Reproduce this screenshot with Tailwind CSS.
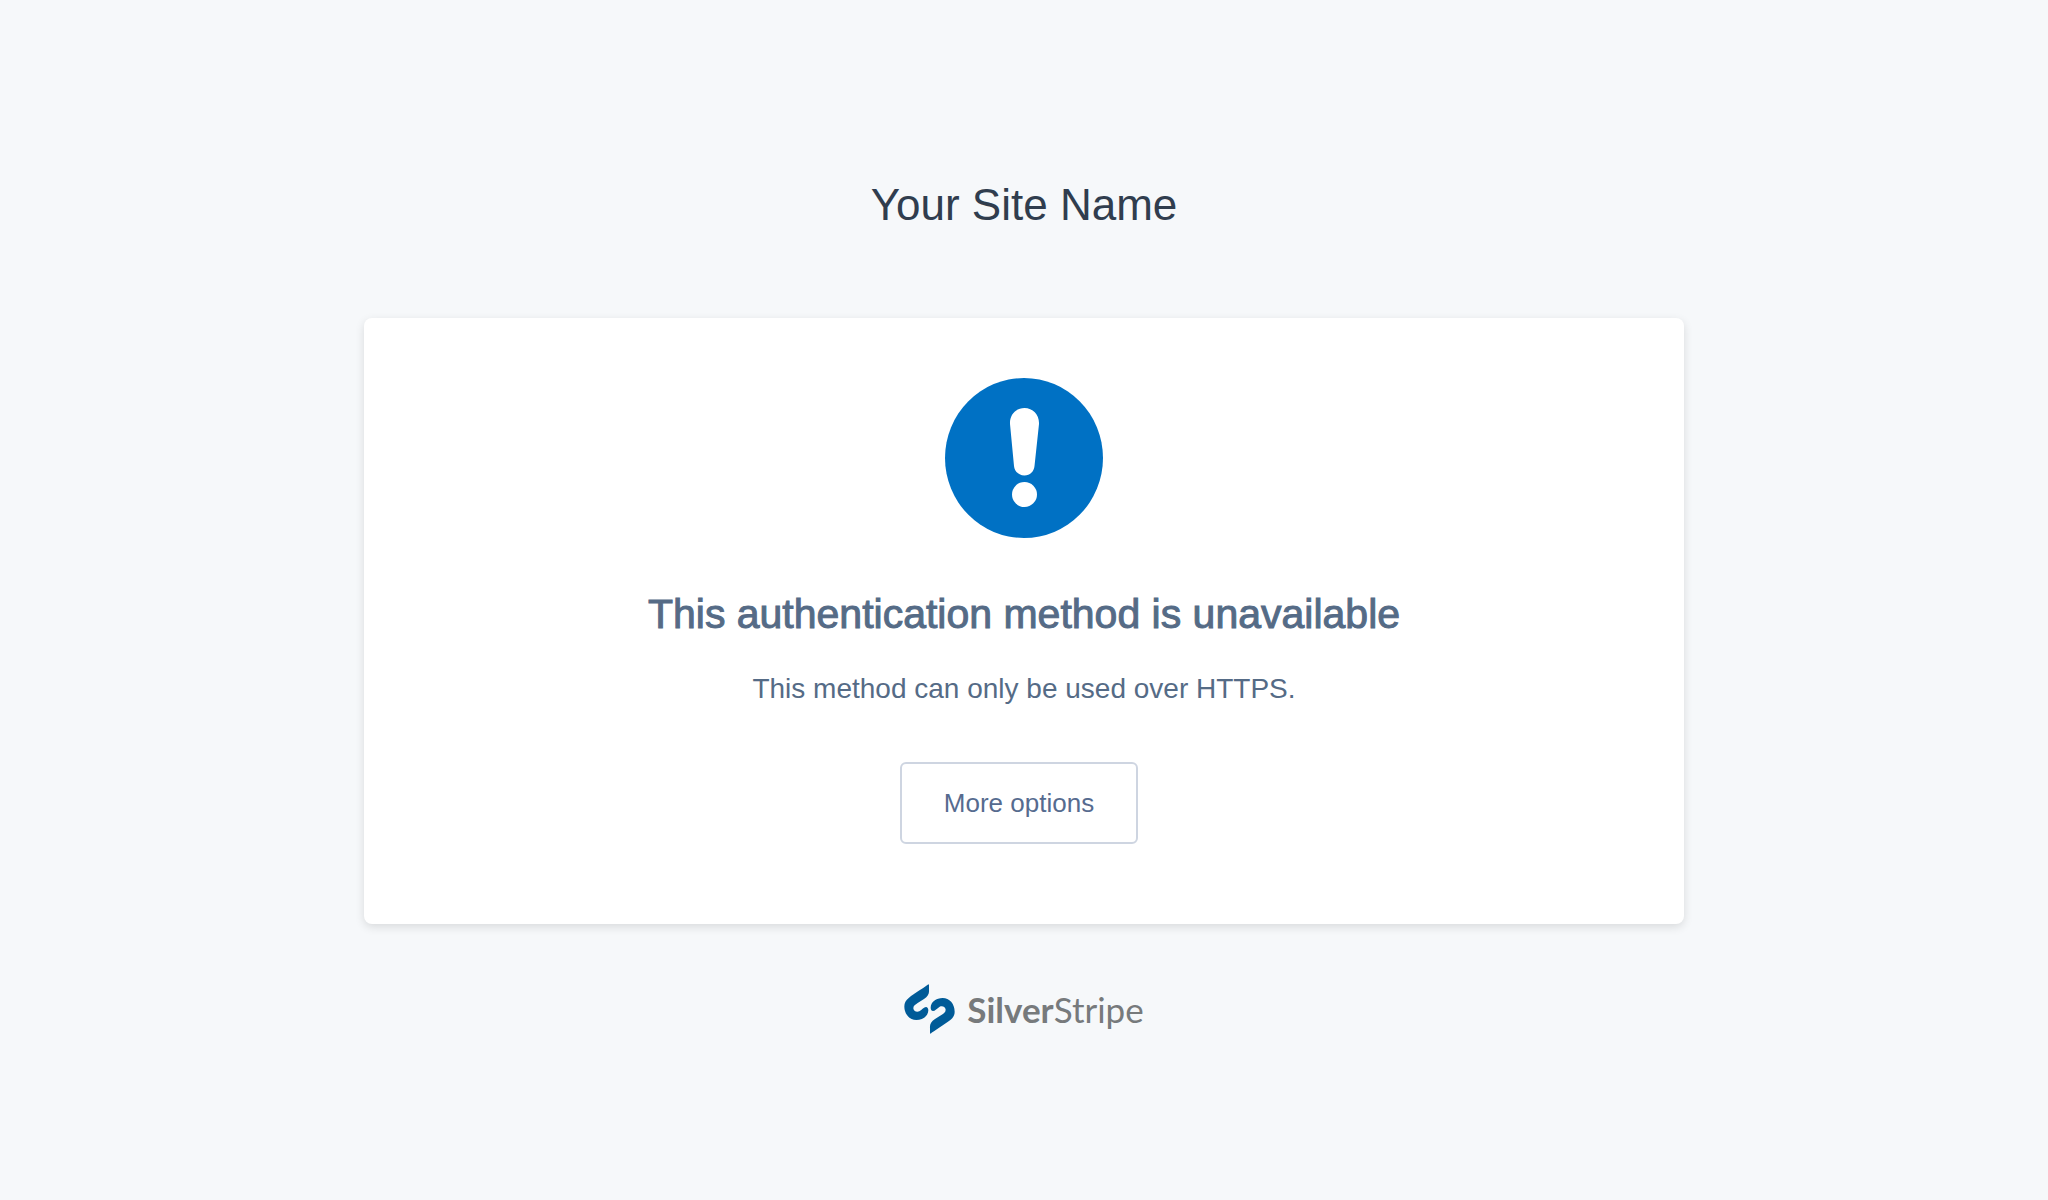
<!DOCTYPE html>
<html lang="en">
<head>
<meta charset="utf-8">
<meta name="viewport" content="width=device-width, initial-scale=1">
<title>Your Site Name</title>
<script src="https://cdn.jsdelivr.net/npm/@tailwindcss/browser@4"></script>
</head>
<body class="min-h-screen bg-[#f6f8fa] px-6 pt-[180px] pb-16 font-['Liberation_Sans',Arial,sans-serif] text-[#556b86]">
  <header class="text-center">
    <h1 class="text-[44px] leading-[50px] text-[#303d4e]">Your Site Name</h1>
  </header>
  <main class="mx-auto mt-[88px] flex w-full max-w-[1320px] flex-col items-center rounded-lg bg-white px-10 pt-[60px] pb-20 text-center shadow-[0_3px_10px_rgba(0,0,0,0.12)]">
    <svg class="size-40" viewBox="0 0 160 160" aria-hidden="true">
      <ellipse cx="80" cy="80" rx="79" ry="80" fill="#0071c4"/>
      <path fill="#fff" d="M80.500 30C71.500 30 65.500 37 66 46L70 88C70.500 93.500 75 97.500 80.500 97.500S90 93.500 90.500 88L95 46C95.500 37 89 30 80.500 30Z"/>
      <circle cx="80.500" cy="116.500" r="12.500" fill="#fff"/>
    </svg>
    <h2 class="mt-[52px] text-[41px] leading-12 [-webkit-text-stroke:1px_currentColor]">This authentication method is unavailable</h2>
    <p class="mt-[31px] text-[28px] leading-10">This method can only be used over HTTPS.</p>
    <button type="button" class="mt-[53px] mr-2.5 min-w-[238px] rounded-md border-2 border-[#ced5e1] px-10 py-5 text-[26px] leading-[38px] text-[#566b8f]">More options</button>
  </main>
  <footer class="mt-[60px] flex justify-center">
    <a href="#" class="flex items-center gap-3 text-[#777a7c]">
      <svg class="h-[50px] w-[51px]" viewBox="26 26 153 150" aria-hidden="true">
        <g fill="#005b98">
          <path id="stripe" d="M99 27C92 33 55 56 41 67C31 75 27 83 27 93C27 117 43 134 63 134C82 134 99 122 99 105C99 99 96 95 92 95C86 95 80 103 72 108C63 112 54 106 54 99C54 91 60 88 67 83L86 71C98 63 102 55 101 44L101 30C101 28 100 27 99 27Z"/>
          <use href="#stripe" transform="rotate(180 102.500 101)"/>
        </g>
      </svg>
      <span class="font-[Lato,sans-serif] text-[35px] leading-[50px]"><b class="font-bold">Silver</b>Stripe</span>
    </a>
  </footer>
</body>
</html>
